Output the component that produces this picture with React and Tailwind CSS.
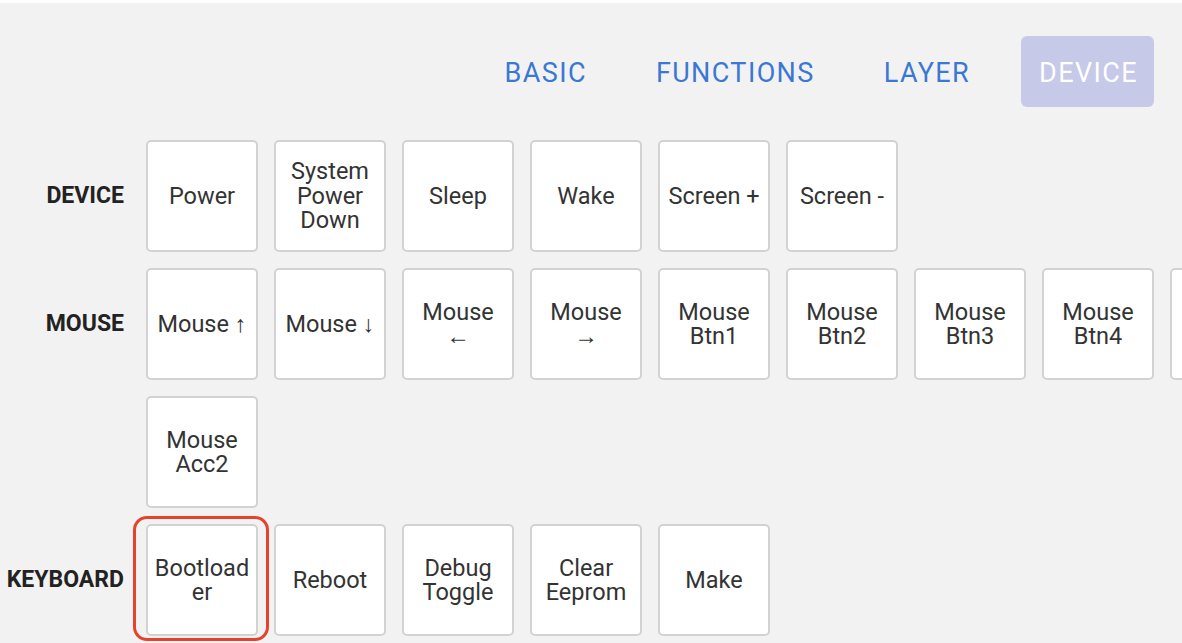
import React from 'react';

const tabs = ['BASIC', 'FUNCTIONS', 'LAYER', 'DEVICE'];

const rows = [
  {
    label: 'DEVICE',
    keys: [['Power'], ['System', 'Power', 'Down'], ['Sleep'], ['Wake'], ['Screen +'], ['Screen -']],
  },
  {
    label: 'MOUSE',
    wide: true,
    keys: [
      ['Mouse ↑'], ['Mouse ↓'], ['Mouse', '←'], ['Mouse', '→'],
      ['Mouse', 'Btn1'], ['Mouse', 'Btn2'], ['Mouse', 'Btn3'], ['Mouse', 'Btn4'], ['Mouse', 'Btn5'],
      ['Wheel ↑'], ['Wheel ↓'], ['Wheel', '←'], ['Wheel', '→'], ['Mouse', 'Acc0'], ['Mouse', 'Acc1'],
      ['Mouse', 'Acc2'],
    ],
  },
  {
    label: 'KEYBOARD',
    keys: [['Bootload', 'er'], ['Reboot'], ['Debug', 'Toggle'], ['Clear', 'Eeprom'], ['Make']],
  },
];

function Key({ lines }) {
  return (
    <button className="w-[112px] h-[112px] shrink-0 bg-white border-2 border-[#d2d2d2] rounded-[5px] flex flex-col items-center justify-center text-[23.5px] leading-[24.5px] text-[#333]">
      {lines.map((l, i) => (
        <span key={i} className="whitespace-nowrap">{l}</span>
      ))}
    </button>
  );
}

export default function App() {
  return (
    <div className="relative w-full h-[643px] overflow-hidden bg-[#f2f2f2] font-['Roboto',sans-serif]">
      <div className="h-[3px] bg-white" />

      {/* tab bar */}
      <div className="flex justify-end gap-[35px] pt-[33px] pr-[28px]">
        {tabs.map((t) => (
          <button
            key={t}
            className={
              t === 'DEVICE'
                ? 'h-[71px] pt-[3px] pl-[18px] pr-[16px] rounded-[6px] bg-[#c6c9e7] text-white text-[27px] tracking-[1.4px]'
                : 'h-[71px] pt-[3px] pl-[18px] pr-[16px] rounded-[6px] text-[#3a78d4] text-[27px] tracking-[1.4px]'
            }
          >
            {t}
          </button>
        ))}
      </div>

      {/* key rows */}
      <div className="flex flex-col gap-[16px] mt-[33px]">
        {rows.map((row) => (
          <div key={row.label} className="flex items-start">
            <div className="w-[124px] h-[112px] shrink-0 flex items-center justify-end text-[23px] font-bold text-[#222]">
              {row.label}
            </div>
            <div
              className={
                row.wide
                  ? 'ml-[22px] w-[1910px] shrink-0 flex flex-wrap gap-[16px]'
                  : 'ml-[22px] flex flex-wrap gap-[16px]'
              }
            >
              {row.keys.map((k, i) => (
                <Key key={i} lines={k} />
              ))}
            </div>
          </div>
        ))}
      </div>

      {/* highlight around Bootloader */}
      <div className="absolute left-[133px] top-[516px] w-[136px] h-[125px] border-[3px] border-[#e5432d] rounded-[14px] pointer-events-none" />
    </div>
  );
}
